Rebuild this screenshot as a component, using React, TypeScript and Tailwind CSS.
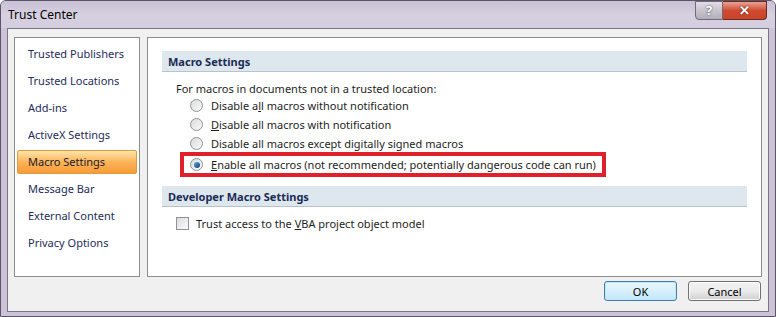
import React from "react";

const navItems = [
  "Trusted Publishers",
  "Trusted Locations",
  "Add-ins",
  "ActiveX Settings",
  "Macro Settings",
  "Message Bar",
  "External Content",
  "Privacy Options",
];

function Radio({ checked }: { checked?: boolean }) {
  return (
    <span className="w-[13px] h-[13px] rounded-full border border-[#8f9296] bg-gradient-to-br from-[#d9dadb] to-[#fbfbfb] flex items-center justify-center shrink-0">
      {checked && (
        <span className="w-[6px] h-[6px] rounded-full bg-gradient-to-br from-[#5fa7de] to-[#0c3e80]" />
      )}
    </span>
  );
}

function SectionHeader({ children }: { children: React.ReactNode }) {
  return (
    <div className="h-[21px] bg-[#dee6ee] border-b border-[#b7c4d0] flex items-center pl-[6px] font-bold text-[#182c54]">
      {children}
    </div>
  );
}

export default function App() {
  return (
    <div className="w-[776px] h-[317px] font-['Noto_Sans',sans-serif] text-[11px] leading-none whitespace-nowrap overflow-hidden bg-[#ccc3d6] flex flex-col rounded-t-[6px] border border-[#5b5566]">
      {/* title bar */}
      <div className="h-[27px] flex items-start bg-gradient-to-b from-[#c9c0d6] via-[#d6d0df] to-[#d3cde0] relative shrink-0">
        <span className="ml-[7px] mt-[8px] text-black text-[12px]">Trust Center</span>
        <div className="ml-auto mr-[8px] flex">
          <div className="w-[28px] h-[19px] rounded-bl-[4px] border border-[#6f6a78] bg-gradient-to-b from-[#e2dde8] via-[#c8c3cf] to-[#b2aebb] flex items-center justify-center text-white font-bold text-[13px] [text-shadow:0_0_2px_#333]">
            ?
          </div>
          <div className="w-[44px] h-[19px] rounded-br-[4px] border border-l-0 border-[#6a2a22] bg-gradient-to-b from-[#e8a293] via-[#cf4a30] to-[#c9452a] flex items-center justify-center text-white font-bold text-[13px] [text-shadow:0_0_2px_#3a0a00]">
            ✕
          </div>
        </div>
      </div>

      {/* client area */}
      <div className="mx-[6px] h-[284px] bg-[#f0f0f0] border border-[#7a7484] flex flex-col pt-[8px] px-[6px]">
        <div className="flex gap-[7px] h-[240px]">
          {/* nav */}
          <div className="w-[126px] bg-white border border-[#8d8d8d] pt-[2px] px-[2px] flex flex-col">
            {navItems.map((item) => (
              <div
                key={item}
                className={
                  item === "Macro Settings"
                    ? "h-[24px] my-[1.5px] flex items-center pl-[10px] text-[#1a1a2e] rounded-[2px] border border-[#e29a3e] bg-gradient-to-b from-[#fde5a8] via-[#fbb358] to-[#f99b38]"
                    : "h-[27px] flex items-center pl-[11px] text-[#1e2c5a]"
                }
              >
                {item}
              </div>
            ))}
          </div>

          {/* right panel */}
          <div className="flex-1 bg-white border border-[#8d8d8d] pt-[13px] pl-[14px] pr-[14px]">
            <SectionHeader>Macro Settings</SectionHeader>
            <div className="pl-[14px] pt-[9px] text-[#1e1e1e]">
              <div className="h-[15px] flex items-center">For macros in documents not in a trusted location:</div>
              <div className="pl-[14px] flex flex-col">
                <div className="h-[19px] flex items-center gap-[8px]">
                  <Radio />
                  <span>
                    Disable a<u>l</u>l macros without notification
                  </span>
                </div>
                <div className="h-[19px] flex items-center gap-[8px]">
                  <Radio />
                  <span>
                    <u>D</u>isable all macros with notification
                  </span>
                </div>
                <div className="h-[19px] flex items-center gap-[8px]">
                  <Radio />
                  <span>Disable all macros except digitally signed macros</span>
                </div>
                <div className="h-[25px] w-[426px] -ml-[10px] -mt-[1px] flex items-center gap-[8px] border-4 border-[#e0202b] pl-[6px]">
                  <Radio checked />
                  <span>
                    <u>E</u>nable all macros (not recommended; potentially dangerous code can run)
                  </span>
                </div>
              </div>
            </div>
            <div className="mt-[9px]">
              <SectionHeader>Developer Macro Settings</SectionHeader>
            </div>
            <div className="pl-[14px] pt-[10px] flex items-center gap-[7px] text-[#1e1e1e]">
              <span className="w-[13px] h-[13px] border border-[#8f9296] bg-gradient-to-br from-[#dcdcdc] to-[#fbfbfb] shrink-0" />
              <span>
                Trust access to the <u>V</u>BA project object model
              </span>
            </div>
          </div>
        </div>

        {/* buttons */}
        <div className="flex justify-end gap-[11px] mt-[4px] pr-[1px]">
          <button className="w-[73px] h-[20px] rounded-[3px] border border-[#3c7fb1] bg-gradient-to-b from-[#eaf6fd] via-[#d9f0fc] to-[#bee6fd] text-black shadow-[inset_0_0_0_1px_#c4e5f6]">
            OK
          </button>
          <button className="w-[73px] h-[20px] rounded-[3px] border border-[#707070] bg-gradient-to-b from-[#f2f2f2] via-[#ebebeb] to-[#cfcfcf] text-black shadow-[inset_0_0_0_1px_#fcfcfc]">
            Cancel
          </button>
        </div>
      </div>
    </div>
  );
}
